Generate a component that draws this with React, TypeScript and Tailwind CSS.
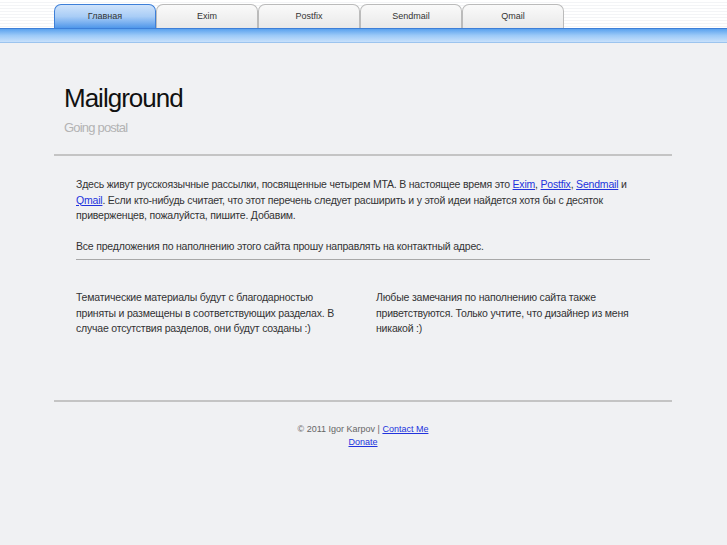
const tabs = ['Главная', 'Exim', 'Postfix', 'Sendmail', 'Qmail']

const Link = ({ children }: { children: React.ReactNode }) => (
  <a href="#" className="text-[#2233dd] underline">
    {children}
  </a>
)

export default function App() {
  return (
    <div
      className="min-h-[545px] bg-[#f0f1f3] text-[#333]"
      style={{ fontFamily: '"Liberation Sans", Arial, sans-serif' }}
    >
      {/* top strip with tabs */}
      <div className="bg-[repeating-linear-gradient(180deg,#ffffff_0px,#ffffff_2px,#f3f4f6_2px,#f3f4f6_3px)]">
        <div className="ml-[54px] flex h-[28px] w-[618px] items-end">
          {tabs.map((t, i) => (
            <div
              key={t}
              className={`flex h-[24px] w-[102px] items-center justify-center rounded-t-[7px] border border-b-0 text-[9px] ${
                i === 0
                  ? 'border-[#3d7fd8] bg-gradient-to-b from-[#cfe3fb] via-[#a9cdf6] to-[#4f97ea] text-[#333]'
                  : 'border-[#bbbbbb] bg-gradient-to-b from-[#fafafa] to-[#e9e9e9] text-[#333]'
              }`}
            >
              {t}
            </div>
          ))}
        </div>
      </div>
      <div className="h-[15px] border-t border-[#3d7fd8] border-b border-b-[#9cc4ee] bg-gradient-to-b from-[#5aa2ee] via-[#9ccaf8] to-[#c8e1fb]" />

      <div className="ml-[54px] w-[618px]">
        <div className="px-[10px] pt-[40px] pb-[18px]">
          <h1 className="text-[26px] leading-[30px] tracking-[-1px] text-[#111]">Mailground</h1>
          <p className="mt-[7px] text-[13px] leading-[16px] tracking-[-0.8px] text-[#b3b3b3]">Going postal</p>
        </div>
        <div className="h-[2px] bg-[#c4c4c4]" />

        <div className="px-[22px] pt-[21px] text-[10.5px] leading-[15.5px] tracking-[-0.2px] text-[#333]">
          <p>
            Здесь живут русскоязычные рассылки, посвященные четырем MTA. В настоящее время это <Link>Exim</Link>,{' '}
            <Link>Postfix</Link>, <Link>Sendmail</Link> и <Link>Qmail</Link>. Если кто-нибудь считает, что этот перечень
            следует расширить и у этой идеи найдется хотя бы с десяток приверженцев, пожалуйста, пишите. Добавим.
          </p>
          <p className="mt-[15px]">Все предложения по наполнению этого сайта прошу направлять на контактный адрес.</p>
          <div className="mt-[5px] h-px bg-[#a8a8a8]" />

          <div className="mt-[30px] grid grid-cols-[274px_1fr] gap-[26px]">
            <p>
              Тематические материалы будут с благодарностью приняты и размещены в соответствующих разделах. В случае
              отсутствия разделов, они будут созданы :)
            </p>
            <p className="pr-[20px]">
              Любые замечания по наполнению сайта также приветствуются. Только учтите, что дизайнер из меня никакой :)
            </p>
          </div>
        </div>

        <div className="mt-[63px] h-[2px] bg-[#c4c4c4]" />

        <div className="pt-[21px] text-center text-[9px] leading-[13px] text-[#666]">
          <p>
            © 2011 Igor Karpov | <Link>Contact Me</Link>
          </p>
          <p>
            <Link>Donate</Link>
          </p>
        </div>
      </div>
    </div>
  )
}
